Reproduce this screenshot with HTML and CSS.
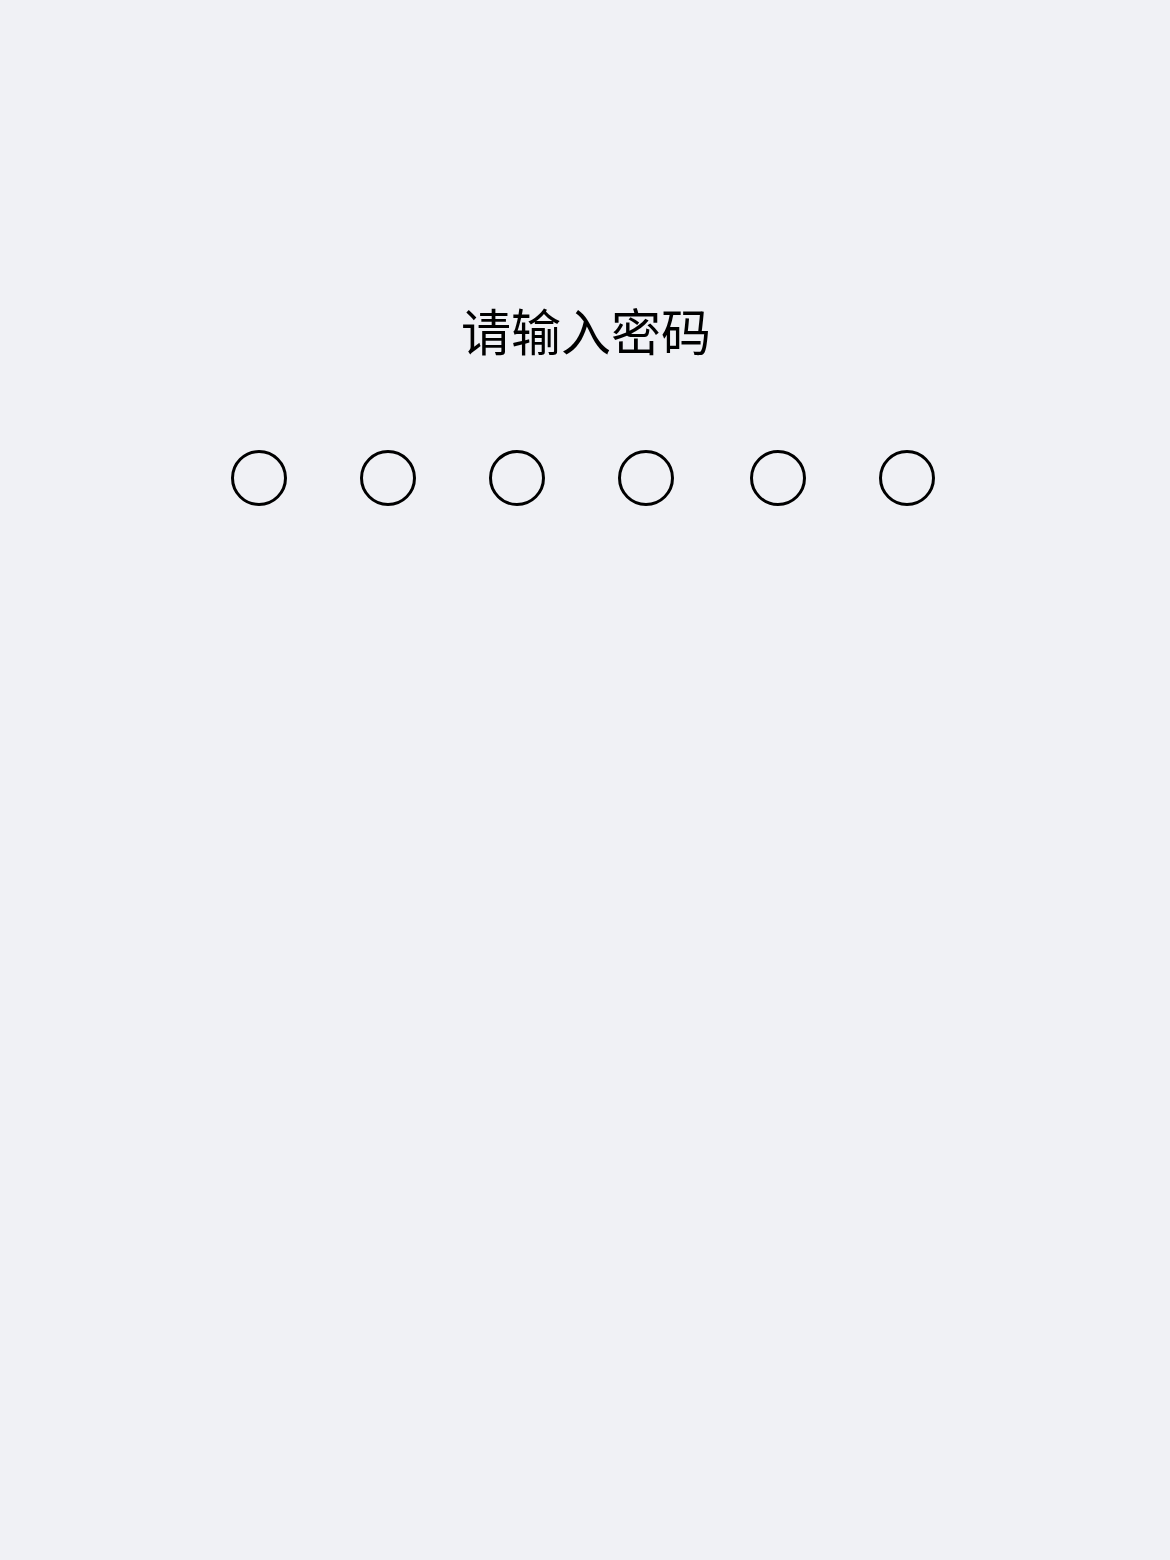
FILE: index.html
```html
<!DOCTYPE html>
<html lang="zh-CN">
<head>
    <meta charset="UTF-8">
    <meta name="viewport" content="width=device-width, initial-scale=1.0">
    <title>请输入密码</title>
    <link rel="stylesheet" href="styles.css">
</head>
<body>
    <div class="lock">
        <h1 class="lock-title">请输入密码</h1>
        <div class="dots">
            <span class="dot"></span>
            <span class="dot"></span>
            <span class="dot"></span>
            <span class="dot"></span>
            <span class="dot"></span>
            <span class="dot"></span>
        </div>
    </div>
</body>
</html>
```

FILE: styles.css
```css
* {
    box-sizing: border-box;
    margin: 0;
    padding: 0;
}

body {
    font-family: 'Noto Sans CJK SC', 'Noto Sans', sans-serif;
    background-color: #f0f1f5;
    min-height: 100vh;
    color: #000;
}

.lock {
    display: flex;
    flex-direction: column;
    align-items: center;
    padding-top: 304px;
}

.lock-title {
    font-size: 50px;
    font-weight: normal;
    line-height: 50px;
    margin-left: 2px;
}

.dots {
    display: flex;
    gap: 73px;
    margin-top: 96px;
    margin-right: 4px;
}

.dot {
    width: 56px;
    height: 56px;
    border: 3px solid #000;
    border-radius: 50%;
}

.dot:nth-child(5) {
    margin-left: 3px;
}
```
